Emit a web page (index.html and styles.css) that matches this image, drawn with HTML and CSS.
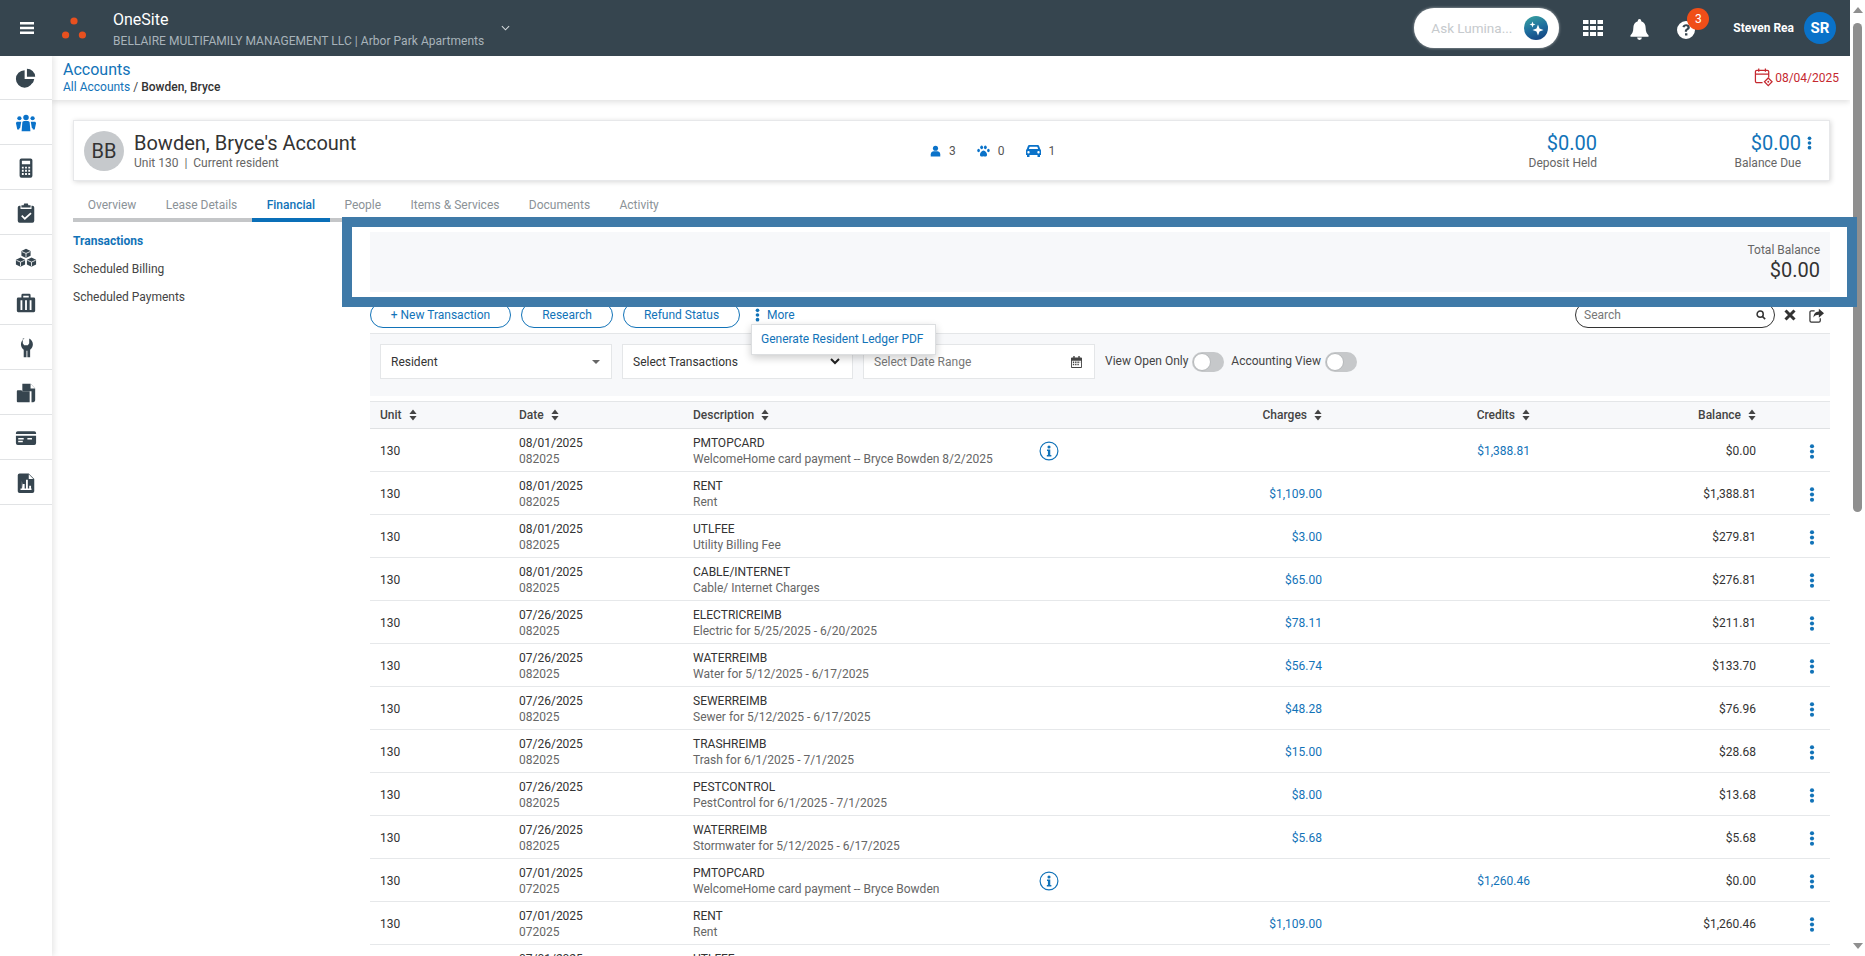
FILE: index.html
```html
<!DOCTYPE html>
<html lang="en">
<head>
<meta charset="utf-8">
<title>OneSite - Accounts</title>
<link rel="stylesheet" href="styles.css">
</head>
<body>
<svg class="defs" width="0" height="0" aria-hidden="true">
  <symbol id="kebab" viewBox="0 0 6 16"><circle cx="3" cy="2.4" r="2.2"/><circle cx="3" cy="8" r="2.2"/><circle cx="3" cy="13.6" r="2.2"/></symbol>
  <symbol id="sort" viewBox="0 0 8 12"><path d="M4 0.5 7.6 5H.4zM4 11.5.4 7h7.2z"/></symbol>
  <symbol id="info" viewBox="0 0 22 22"><circle cx="11" cy="11" r="9.8" fill="none" stroke="currentColor" stroke-width="1.3"/><circle cx="11" cy="6.6" r="1.7" fill="currentColor"/><path fill="currentColor" d="M8.8 9.4h3.6v6h1.2v1.6H8.6v-1.6h1.2v-4.4h-1z"/></symbol>
</svg>
<div class="window">
  <header class="topbar">
    <svg class="burger" viewBox="0 0 14 12" width="14" height="12"><path d="M0 0h14v2.4H0zM0 4.8h14v2.4H0zM0 9.6h14V12H0z"/></svg>
    <svg class="logo" viewBox="0 0 24 22" width="24" height="22"><circle cx="12" cy="4" r="3.6"/><circle cx="3.6" cy="18" r="3.6"/><circle cx="20.4" cy="18" r="3.6"/></svg>
    <div class="brand">
      <div class="brand-name">OneSite</div>
      <div class="brand-sub">BELLAIRE MULTIFAMILY MANAGEMENT LLC | Arbor Park Apartments</div>
    </div>
    <svg class="brand-chevron" viewBox="0 0 10 6" width="9" height="6"><path d="M1 1l4 4 4-4" fill="none" stroke="#d5dadd" stroke-width="1.2"/></svg>
    <div class="lumina">
      <span class="lumina-text">Ask Lumina...</span>
      <span class="lumina-orb">
        <svg viewBox="0 0 24 24" width="24" height="24"><path fill="#fff" d="M14 8.500l1.500 4 4 1.500-4 1.500-1.500 4-1.500-4-4-1.500 4-1.500zM8.500 5.500l.8 2.200 2.200.8-2.200.8-.8 2.200-.8-2.200-2.200-.8 2.200-.8z"/></svg>
      </span>
    </div>
    <svg class="top-icon grid-icon" viewBox="0 0 20 16" width="20" height="16"><path d="M0 0h5.500v4H0zM7 0h6v4H7zM14.500 0H20v4h-5.500zM0 6h5.500v4H0zM7 6h6v4H7zM14.500 6H20v4h-5.500zM0 12h5.500v4H0zM7 12h6v4H7zM14.500 12H20v4h-5.500z"/></svg>
    <svg class="top-icon bell-icon" viewBox="0 0 20 22" width="19" height="21"><path d="M10 0a1.800 1.800 0 0 1 1.800 1.800v.6C15 3.200 16.500 6 16.500 9.500c0 4.200 1.300 5.800 3 7.500v1.500H.5V17c1.700-1.700 3-3.300 3-7.500C3.500 6 5 3.200 8.200 2.400v-.6A1.800 1.800 0 0 1 10 0zM7.500 19.500h5a2.500 2.500 0 0 1-5 0z"/></svg>
    <div class="help">
      <svg class="top-icon" viewBox="0 0 18 18" width="18" height="18"><path fill-rule="evenodd" d="M9 0a9 9 0 1 1 0 18A9 9 0 0 1 9 0zM9.200 3.200c-2 0-3.300 1-3.800 2.500l2 .8c.3-.8.800-1.300 1.700-1.300.8 0 1.400.4 1.400 1.100 0 .6-.4.900-1.200 1.400-1 .6-1.500 1.300-1.500 2.500v.6h2.200v-.4c0-.6.300-.9 1-1.300 1.100-.7 1.800-1.400 1.800-2.800 0-1.900-1.600-3.100-3.600-3.100zM8 12.300v2.300h2.400v-2.300z"/></svg>
      <span class="badge">3</span>
    </div>
    <span class="user-name">Steven Rea</span>
    <span class="user-avatar">SR</span>
  </header>

  <div class="body-row">
    <nav class="sidebar">
      <a class="side-item"><svg viewBox="0 0 24 24" width="22" height="22"><path d="M10.500 3.500A9.500 9.500 0 1 0 20 13h-9.500z"/><path d="M13 2a9 9 0 0 1 9 8.500h-9z"/><path d="M13.500 13H21a9 9 0 0 1-2.700 5.300z"/></svg></a>
      <a class="side-item active"><svg viewBox="0 0 24 24" width="22" height="22"><circle cx="12" cy="6" r="3"/><path d="M8 11.500c0-1 1-1.800 2-1.800h4c1 0 2 .8 2 1.800l.8 9.500H7.200z"/><circle cx="4.800" cy="6.800" r="2.300"/><path d="M2 10.500h4.800L5.600 17.500H5l-.5 1.500H2.500L1 12z"/><circle cx="19.200" cy="6.800" r="2.300"/><path d="M22 10.500h-4.800l1.200 7h.6l.5 1.500h2l1.500-7z"/></svg></a>
      <a class="side-item"><svg viewBox="0 0 24 24" width="22" height="22"><path fill-rule="evenodd" d="M7 1.500h10a2 2 0 0 1 2 2v17a2 2 0 0 1-2 2H7a2 2 0 0 1-2-2v-17a2 2 0 0 1 2-2zM7.500 4v4h9V4zM7.500 10.500v2h2v-2zm3.500 0v2h2v-2zm3.500 0v2h2v-2zM7.500 14v2h2v-2zm3.500 0v2h2v-2zm3.500 0v2h2v-2zM7.500 17.500v2h2v-2zm3.500 0v2h2v-2zm3.500 0v2h2v-2z"/></svg></a>
      <a class="side-item"><svg viewBox="0 0 24 24" width="22" height="22"><path fill-rule="evenodd" d="M10 1.500h4l.6 2H17V6H7V3.500h2.400zM5 4h1v3.500h12V4h1a2 2 0 0 1 2 2v14.500a2 2 0 0 1-2 2H5a2 2 0 0 1-2-2V6a2 2 0 0 1 2-2zm11.800 7.500L10.700 17 8 14.300l-1.300 1.300 4 3.900 7.400-6.600z"/></svg></a>
      <a class="side-item"><svg viewBox="0 0 24 24" width="22" height="22"><path d="M12 2l5 2.300v5.200l-5 2.400-5-2.400V4.300z"/><path d="M6 11.500l5 2.300V19l-5 2.500L1 19v-5.200z"/><path d="M18 11.500l5 2.300V19l-5 2.500-5-2.500v-5.200z"/><path class="gap" d="M7.500 5l4.500 2 4.500-2M12 7v4.500M1.500 14.500l4.500 2 4.500-2M6 16.500v4.500M13.500 14.500l4.500 2 4.500-2M18 16.500v4.500"/></svg></a>
      <a class="side-item"><svg viewBox="0 0 24 24" width="22" height="22"><path fill-rule="evenodd" d="M8.500 2h7A1.500 1.500 0 0 1 17 3.500V6h3.500A1.500 1.500 0 0 1 22 7.500v13a1.500 1.500 0 0 1-1.500 1.500h-17A1.500 1.500 0 0 1 2 20.500v-13A1.500 1.500 0 0 1 3.500 6H7V3.500A1.500 1.500 0 0 1 8.500 2zM9 4v2h6V4zM6 9v10.500h2V9zm5 0v10.500h2V9zm5 0v10.500h2V9z"/></svg></a>
      <a class="side-item"><svg viewBox="0 0 24 24" width="22" height="22"><path d="M8.500 1.500v5.200L10 9h4l1.500-2.300V1.500c2.500 1.200 4 3.700 4 6.300 0 2.500-1.300 4.700-3 6v8.200h-3v-7h-1v7h-3V13.800c-1.700-1.300-3-3.500-3-6 0-2.600 1.500-5.100 4-6.300z"/></svg></a>
      <a class="side-item"><svg viewBox="0 0 24 24" width="22" height="22"><path d="M8 2h9l5 5v13a2 2 0 0 1-2 2h-2V10H8z"/><path d="M2 10a1 1 0 0 1 1-1h4l1 1h8v12H3a1 1 0 0 1-1-1z"/><path class="fold" d="M17 2v5h5z"/></svg></a>
      <a class="side-item"><svg viewBox="0 0 24 24" width="22" height="22"><path fill-rule="evenodd" d="M3 4.500h18a2 2 0 0 1 2 2v11a2 2 0 0 1-2 2H3a2 2 0 0 1-2-2v-11a2 2 0 0 1 2-2zM1 7.500v2h22v-2zM3.500 12v1.500h6V12zm10 0v1.500h5V12zM3.500 15v1.500h5V15z"/></svg></a>
      <a class="side-item"><svg viewBox="0 0 24 24" width="22" height="22"><path fill-rule="evenodd" d="M5 1.500h10l6 6V21a2 2 0 0 1-2 2H5a2 2 0 0 1-2-2V3.500a2 2 0 0 1 2-2zM15 2.500v5h5zM7.500 9.500v8.500H6v1.500h12V18h-.5v-3h-2v3H14V8.500h-2V18h-1.500v-5h-2v5z"/></svg></a>
    </nav>

    <main class="main">
      <div class="page-head">
        <div>
          <div class="page-title">Accounts</div>
          <div class="crumbs"><a>All Accounts</a> / <b>Bowden, Bryce</b></div>
        </div>
        <div class="as-of">
          <svg viewBox="0 0 20 20" width="19" height="19"><path fill="none" stroke="currentColor" stroke-width="1.300" d="M9 15.500H3a1.500 1.500 0 0 1-1.500-1.500V4A1.500 1.500 0 0 1 3 2.500h11A1.500 1.500 0 0 1 15.500 4v6M1.500 6.500h14M5 .5v3.500M12 .5v3.500"/><path fill="none" stroke="currentColor" stroke-width="1.300" d="M15 10.500l4 4-4 4-4-4z"/><circle cx="15" cy="14.500" r="1" fill="currentColor"/></svg>
          <span>08/04/2025</span>
        </div>
      </div>

      <section class="account-card">
        <div class="identity">
          <span class="initials">BB</span>
          <div>
            <div class="account-name">Bowden, Bryce's Account</div>
            <div class="account-sub">Unit 130&nbsp; |&nbsp; Current resident</div>
          </div>
        </div>
        <div class="stats">
          <span class="stat"><svg viewBox="0 0 12 12" width="11" height="12"><circle cx="6" cy="3" r="2.800"/><path d="M.8 12V9.500C.8 7.500 2.500 6.200 4 6.200h4c1.500 0 3.200 1.300 3.200 3.300V12z"/></svg>3</span>
          <span class="stat"><svg viewBox="0 0 14 12" width="13" height="12"><ellipse cx="5" cy="2" rx="1.500" ry="2"/><ellipse cx="9" cy="2" rx="1.500" ry="2"/><ellipse cx="1.700" cy="5.500" rx="1.400" ry="1.800"/><ellipse cx="12.300" cy="5.500" rx="1.400" ry="1.800"/><path d="M7 5.500c2 0 3.800 2.500 3.800 4.500 0 1.500-1.200 2-2 2-.7 0-1.200-.4-1.800-.4s-1.100.4-1.800.4c-.8 0-2-.5-2-2 0-2 1.800-4.500 3.800-4.500z"/></svg>0</span>
          <span class="stat"><svg viewBox="0 0 15 12" width="15" height="12"><path fill-rule="evenodd" d="M3.500 0h8c.8 0 1.400.5 1.700 1.200L14.200 4c.5.400.8 1 .8 1.600V10h-1v2h-2.500v-2h-8v2H1v-2H0V5.600C0 5 .3 4.400.8 4l1-2.800C2.100.5 2.700 0 3.500 0zm.2 1.800L2.900 4h9.200l-.8-2.200zM2.500 6a1.200 1.200 0 1 0 0 2.400 1.200 1.200 0 0 0 0-2.400zm10 0a1.200 1.200 0 1 0 0 2.400 1.200 1.200 0 0 0 0-2.400z"/></svg>1</span>
        </div>
        <div class="money deposit">
          <div class="amount">$0.00</div>
          <div class="amount-label">Deposit Held</div>
        </div>
        <div class="money due">
          <div class="amount">$0.00</div>
          <div class="amount-label">Balance Due</div>
        </div>
        <svg class="card-kebab" width="5" height="14"><use href="#kebab"/></svg>
      </section>

      <div class="tabs">
        <a class="tab">Overview</a>
        <a class="tab">Lease Details</a>
        <a class="tab on">Financial</a>
        <a class="tab">People</a>
        <a class="tab">Items &amp; Services</a>
        <a class="tab">Documents</a>
        <a class="tab">Activity</a>
      </div>

      <div class="content">
        <aside class="subnav">
          <a class="on">Transactions</a>
          <a>Scheduled Billing</a>
          <a>Scheduled Payments</a>
        </aside>

        <div class="panel">
          <div class="summary">
            <div class="summary-label">Total Balance</div>
            <div class="summary-value">$0.00</div>
          </div>

          <div class="toolbar">
            <button class="pill w-new">+ New Transaction</button>
            <button class="pill w-research">Research</button>
            <button class="pill w-refund">Refund Status</button>
            <div class="more">
              <svg class="more-kebab" width="5" height="14"><use href="#kebab"/></svg>
              <span>More</span>
              <div class="more-menu">Generate Resident Ledger PDF</div>
            </div>
            <div class="search">
              <span>Search</span>
              <svg viewBox="0 0 12 12" width="10" height="10"><circle cx="5" cy="5" r="3.700" fill="none" stroke="#333" stroke-width="1.800"/><path d="M7.800 7.800L11 11" stroke="#333" stroke-width="2"/></svg>
            </div>
            <svg class="tool-x" viewBox="0 0 12 12" width="12" height="12"><path d="M1.500 1.500l9 9M10.500 1.500l-9 9" stroke="#333" stroke-width="3"/></svg>
            <svg class="tool-share" viewBox="0 0 16 15" width="15" height="15"><path d="M10.500 .2v3C6.800 3.300 5 6 4.800 9.500 6.300 7.500 8 6.800 10.500 6.800v3L16 5z" fill="#333"/><path d="M6 2.500H2.500A1.500 1.500 0 0 0 1 4v9a1.500 1.500 0 0 0 1.500 1.500h8A1.500 1.500 0 0 0 12 13v-2.500" fill="none" stroke="#333" stroke-width="1.300"/></svg>
          </div>

          <div class="filters">
            <div class="field w-res"><span class="dark">Resident</span><i class="tri"></i></div>
            <div class="field w-sel"><span class="dark">Select Transactions</span><svg viewBox="0 0 10 7" width="10" height="7"><path d="M1 1l4 4 4-4" fill="none" stroke="#222" stroke-width="2"/></svg></div>
            <div class="field w-date"><span class="ph">Select Date Range</span><svg viewBox="0 0 12 13" width="11" height="12"><path fill="#444" fill-rule="evenodd" d="M2.500 0h1.500v1.500h4V0h1.500v1.500H11a1 1 0 0 1 1 1V12a1 1 0 0 1-1 1H1a1 1 0 0 1-1-1V2.500a1 1 0 0 1 1-1h1.500zM1 5v7h10V5zm1 1h1.500v1.500H2zm2.500 0H6v1.500H4.500zM7 6h1.500v1.500H7zm2.500 0H10v1.500h-.5zM2 8.500h1.500V10H2zm2.500 0H6V10H4.500zm2.500 0h1.500V10H7z"/></svg></div>
            <span class="toggle-label first">View Open Only</span><span class="toggle"><i></i></span>
            <span class="toggle-label">Accounting View</span><span class="toggle"><i></i></span>
          </div>

          <div class="tr th">
            <span>Unit <svg width="8" height="12"><use href="#sort"/></svg></span>
            <span>Date <svg width="8" height="12"><use href="#sort"/></svg></span>
            <span>Description <svg width="8" height="12"><use href="#sort"/></svg></span>
            <span></span>
            <span class="r">Charges <svg width="8" height="12"><use href="#sort"/></svg></span>
            <span class="r">Credits <svg width="8" height="12"><use href="#sort"/></svg></span>
            <span class="r">Balance <svg width="8" height="12"><use href="#sort"/></svg></span>
            <span></span>
          </div>

          <div class="tr"><span>130</span><div><div>08/01/2025</div><div class="sub">082025</div></div><div><div>PMTOPCARD</div><div class="sub">WelcomeHome card payment -- Bryce Bowden 8/2/2025</div></div><svg class="info" width="20" height="20"><use href="#info"/></svg><span></span><a class="r link">$1,388.81</a><span class="r">$0.00</span><svg class="row-kebab" width="6" height="15"><use href="#kebab"/></svg></div>
          <div class="tr"><span>130</span><div><div>08/01/2025</div><div class="sub">082025</div></div><div><div>RENT</div><div class="sub">Rent</div></div><span></span><a class="r link">$1,109.00</a><span></span><span class="r">$1,388.81</span><svg class="row-kebab" width="6" height="15"><use href="#kebab"/></svg></div>
          <div class="tr"><span>130</span><div><div>08/01/2025</div><div class="sub">082025</div></div><div><div>UTLFEE</div><div class="sub">Utility Billing Fee</div></div><span></span><a class="r link">$3.00</a><span></span><span class="r">$279.81</span><svg class="row-kebab" width="6" height="15"><use href="#kebab"/></svg></div>
          <div class="tr"><span>130</span><div><div>08/01/2025</div><div class="sub">082025</div></div><div><div>CABLE/INTERNET</div><div class="sub">Cable/ Internet Charges</div></div><span></span><a class="r link">$65.00</a><span></span><span class="r">$276.81</span><svg class="row-kebab" width="6" height="15"><use href="#kebab"/></svg></div>
          <div class="tr"><span>130</span><div><div>07/26/2025</div><div class="sub">082025</div></div><div><div>ELECTRICREIMB</div><div class="sub">Electric for 5/25/2025 - 6/20/2025</div></div><span></span><a class="r link">$78.11</a><span></span><span class="r">$211.81</span><svg class="row-kebab" width="6" height="15"><use href="#kebab"/></svg></div>
          <div class="tr"><span>130</span><div><div>07/26/2025</div><div class="sub">082025</div></div><div><div>WATERREIMB</div><div class="sub">Water for 5/12/2025 - 6/17/2025</div></div><span></span><a class="r link">$56.74</a><span></span><span class="r">$133.70</span><svg class="row-kebab" width="6" height="15"><use href="#kebab"/></svg></div>
          <div class="tr"><span>130</span><div><div>07/26/2025</div><div class="sub">082025</div></div><div><div>SEWERREIMB</div><div class="sub">Sewer for 5/12/2025 - 6/17/2025</div></div><span></span><a class="r link">$48.28</a><span></span><span class="r">$76.96</span><svg class="row-kebab" width="6" height="15"><use href="#kebab"/></svg></div>
          <div class="tr"><span>130</span><div><div>07/26/2025</div><div class="sub">082025</div></div><div><div>TRASHREIMB</div><div class="sub">Trash for 6/1/2025 - 7/1/2025</div></div><span></span><a class="r link">$15.00</a><span></span><span class="r">$28.68</span><svg class="row-kebab" width="6" height="15"><use href="#kebab"/></svg></div>
          <div class="tr"><span>130</span><div><div>07/26/2025</div><div class="sub">082025</div></div><div><div>PESTCONTROL</div><div class="sub">PestControl for 6/1/2025 - 7/1/2025</div></div><span></span><a class="r link">$8.00</a><span></span><span class="r">$13.68</span><svg class="row-kebab" width="6" height="15"><use href="#kebab"/></svg></div>
          <div class="tr"><span>130</span><div><div>07/26/2025</div><div class="sub">082025</div></div><div><div>WATERREIMB</div><div class="sub">Stormwater for 5/12/2025 - 6/17/2025</div></div><span></span><a class="r link">$5.68</a><span></span><span class="r">$5.68</span><svg class="row-kebab" width="6" height="15"><use href="#kebab"/></svg></div>
          <div class="tr"><span>130</span><div><div>07/01/2025</div><div class="sub">072025</div></div><div><div>PMTOPCARD</div><div class="sub">WelcomeHome card payment -- Bryce Bowden</div></div><svg class="info" width="20" height="20"><use href="#info"/></svg><span></span><a class="r link">$1,260.46</a><span class="r">$0.00</span><svg class="row-kebab" width="6" height="15"><use href="#kebab"/></svg></div>
          <div class="tr"><span>130</span><div><div>07/01/2025</div><div class="sub">072025</div></div><div><div>RENT</div><div class="sub">Rent</div></div><span></span><a class="r link">$1,109.00</a><span></span><span class="r">$1,260.46</span><svg class="row-kebab" width="6" height="15"><use href="#kebab"/></svg></div>
          <div class="tr"><span>130</span><div><div>07/01/2025</div><div class="sub">072025</div></div><div><div>UTLFEE</div><div class="sub">Utility Billing Fee</div></div><span></span><a class="r link">$3.00</a><span></span><span class="r">$151.46</span><svg class="row-kebab" width="6" height="15"><use href="#kebab"/></svg></div>
        </div>
      </div>
    </main>
  </div>
</div>

<div class="scrollbar">
  <i class="arrow up"></i>
  <span class="thumb"></span>
  <i class="arrow down"></i>
</div>

<div class="highlight"></div>
</body>
</html>
```

FILE: styles.css
```css
* { box-sizing: border-box; }
html, body { margin: 0; height: 100%; overflow: hidden; }
body {
  display: flex;
  font-family: Roboto, "Liberation Sans", sans-serif;
  font-size: 12px;
  color: #333;
  background: #fff;
}
a { color: inherit; text-decoration: none; }
.defs { position: absolute; }

.window { flex: 1; min-width: 0; height: 956px; display: flex; flex-direction: column; overflow: hidden; }

/* top bar */
.topbar {
  height: 56px;
  flex: none;
  display: flex;
  align-items: center;
  background: #36454f;
  color: #fff;
  position: relative;
  z-index: 3;
}
.burger { fill: #fff; margin-left: 20px; }
.logo { fill: #e8501f; margin-left: 28px; }
.brand { margin-left: 27px; }
.brand-name { font-size: 16px; line-height: 20px; margin-top: 2px; margin-bottom: 3px; }
.brand-sub { font-size: 12px; line-height: 16px; color: #a8b3ba; letter-spacing: .04px; }
.brand-chevron { margin-left: 17px; }
.lumina {
  margin-left: auto;
  width: 145px;
  height: 40px;
  border-radius: 20px;
  background: #fff;
  box-shadow: 0 0 3px rgba(255,255,255,.6);
  display: flex;
  align-items: center;
  padding-left: 17px;
}
.lumina-text { color: #c6cacd; font-size: 13.5px; width: 93px; white-space: nowrap; }
.lumina-orb {
  width: 24px; height: 24px; border-radius: 50%;
  background: linear-gradient(160deg, #3aa59f 0%, #1f6f9f 50%, #123c7c 100%);
  display: block;
}
.lumina-orb svg { display: block; }
.top-icon { fill: #fff; display: block; }
.grid-icon { margin-left: 24px; }
.bell-icon { margin-left: 27px; margin-top: 2px; }
.help { position: relative; margin-left: 28px; margin-top: 3px; }
.badge {
  position: absolute; left: 10px; top: -13px;
  width: 22px; height: 22px; border-radius: 50%;
  background: #f04e18; color: #fff;
  font-size: 12px; line-height: 22px; text-align: center;
}
.user-name { margin-left: 38px; font-size: 12px; font-weight: 700; white-space: nowrap; }
.user-avatar {
  margin-left: 10px; margin-right: 14px;
  width: 32px; height: 32px; border-radius: 50%;
  background: #0a72c9; color: #fff;
  font-size: 15px; font-weight: 700; line-height: 32px; text-align: center;
}

.body-row { flex: 1; min-height: 0; display: flex; }

/* left rail */
.sidebar {
  width: 52px; flex: none;
  background: #fff;
  box-shadow: 2px 0 6px rgba(0,0,0,.1);
  position: relative; z-index: 2;
}
.side-item {
  height: 45px;
  padding-top: 1px;
  display: flex; align-items: center; justify-content: center;
  border-bottom: 1px solid #e1e3e5;
}
.side-item:first-child { height: 44px; padding-top: 0; }
.side-item svg { fill: #36454f; display: block; }
.side-item .gap { fill: none; stroke: #fff; stroke-width: .9; }
.side-item .fold { fill: #fff; }
.side-item.active svg { fill: #0a72c9; }

/* main */
.main { flex: 1; min-width: 0; padding: 0; }
.page-head {
  height: 44px;
  padding: 4px 3px 0 11px;
  display: flex; justify-content: space-between;
  background: #fff;
  box-shadow: 0 2px 6px rgba(0,0,0,.13);
  position: relative;
}
.page-title { font-size: 16px; line-height: 20px; color: #1273b8; }
.crumbs { font-size: 12px; line-height: 16px; margin-top: -1px; color: #444; }
.crumbs a { color: #1273b8; }
.crumbs b { font-weight: 500; color: #333; }
.as-of { display: flex; align-items: center; gap: 2px; height: 35px; color: #c5282f; font-size: 12px; padding-right: 8px; }
.as-of svg { display: block; }

.account-card {
  margin: 20px 20px 0 21px;
  height: 61px;
  border: 1px solid #e7e8ea;
  box-shadow: 1px 1px 5px rgba(0,0,0,.16);
  background: #fff;
  display: flex; align-items: center;
  padding-left: 10px;
}
.identity { width: 846px; flex: none; display: flex; align-items: center; gap: 10px; }
.initials {
  width: 40px; height: 40px; border-radius: 50%;
  background: #c6c9cc; color: #333;
  font-size: 20px; line-height: 40px; text-align: center;
  flex: none;
}
.account-name { font-size: 20px; line-height: 24px; color: #333; }
.account-sub { font-size: 12px; line-height: 16px; color: #666; }
.stats { display: flex; gap: 21px; width: 148px; }
.stat { display: flex; align-items: center; gap: 8px; color: #555; font-size: 12px; }
.stat svg { fill: #0a72c9; display: block; }
.money { text-align: right; }
.deposit { width: 519px; }
.due { width: 204px; }
.amount { font-size: 20px; line-height: 24px; color: #1273b8; }
.amount-label { font-size: 12px; line-height: 16px; color: #666; }
.card-kebab { fill: #1273b8; margin-left: 6px; margin-bottom: 15px; }

.tabs { margin: 7px 0 0 21px; display: flex; height: 34px; width: 700px; }
.tab {
  padding: 0 14.7px;
  line-height: 34px;
  border-bottom: 4px solid #c4c6c8;
  color: #8b9297;
  font-size: 12px;
  white-space: nowrap;
}
.tab.on { color: #1273b8; font-weight: 500; border-bottom-color: #0a6fb8; }

.content { display: flex; padding: 0 20px 0 21px; }
.subnav { width: 297px; flex: none; padding-top: 5px; display: flex; flex-direction: column; }
.subnav a { line-height: 28px; height: 28px; font-size: 12px; color: #444; }
.subnav a.on { color: #1273b8; font-weight: 700; }
.panel { flex: 1; min-width: 0; }

.summary {
  margin-top: 10px;
  height: 60px;
  background: #f7f8fa;
  text-align: right;
  padding: 10px 10px 0 0;
}
.summary-label { font-size: 12px; line-height: 16px; color: #666; }
.summary-value { font-size: 20px; line-height: 24px; color: #333; }

.toolbar { margin-top: 10px; height: 26px; margin-bottom: 5px; display: flex; align-items: center; }
.pill {
  height: 26px; border: 1px solid #1273b8; border-radius: 13px;
  background: #fff; color: #1273b8;
  font: 12px Roboto, "Liberation Sans", sans-serif;
  padding: 0;
  margin-right: 10px;
}
.w-new { width: 141px; }
.w-research { width: 92px; }
.w-refund { width: 117px; }
.more { position: relative; display: flex; align-items: center; color: #1273b8; margin-left: 5px; }
.more-kebab { fill: #1273b8; margin-right: 7px; }
.more-menu {
  position: absolute; left: -4px; top: 16px;
  width: 185px; height: 31px;
  background: #fff;
  border: 1px solid #dcdee0;
  box-shadow: 0 3px 8px rgba(0,0,0,.2);
  line-height: 29px;
  padding-left: 9px;
  white-space: nowrap;
  z-index: 4;
}
.search {
  margin-left: auto;
  width: 200px; height: 26px;
  border: 1px solid #333; border-radius: 13px;
  display: flex; align-items: center; justify-content: space-between;
  padding: 0 8px;
  color: #777;
}
.tool-x { margin-left: 9px; }
.tool-share { margin-left: 13px; margin-right: 6px; }

.filters {
  height: 63px;
  background: #f7f8fa;
  border-top: 1px solid #e4e6e8;
  display: flex; align-items: flex-start;
  padding: 10px 0 0 10px;
}
.field {
  height: 35px;
  background: #fff;
  border: 1px solid #e4e6e8;
  display: flex; align-items: center; justify-content: space-between;
  padding: 0 10px;
  margin-right: 10px;
}
.w-res { width: 232px; padding-right: 11px; }
.w-sel { width: 231px; padding-right: 12px; }
.w-date { width: 232px; padding-right: 12px; }
.dark { color: #333; }
.ph { color: #777; }
.tri { width: 0; height: 0; border: 4px solid transparent; border-top: 4px solid #666; border-bottom: 0; }
.toggle-label { line-height: 35px; margin-right: 4px; color: #444; white-space: nowrap; }
.toggle {
  width: 32px; height: 20px; border-radius: 10px;
  background: #c6c8ca;
  margin: 8px 7px 0 0;
  padding: 1px;
  display: block;
}
.toggle i { display: block; width: 18px; height: 18px; border-radius: 50%; background: #fff; border: 1px solid #b5b8ba; }

.tr {
  display: grid;
  grid-template-columns: 139px 174px 347px 18px 264px 208px 226px 1fr;
  align-items: center;
  height: 43px;
  padding: 2px 0 0 10px;
  border-bottom: 1px solid #e6e8ea;
  line-height: 16px;
  color: #333;
}
.tr .r { text-align: right; }
.tr .sub { color: #666; }
.tr .link { color: #1273b8; }
.th {
  height: 28px;
  padding-top: 0;
  margin-top: 5px;
  background: #f7f8fa;
  border-top: 1px solid #e4e6e8;
  border-bottom: 1px solid #dfe1e3;
  font-weight: 500;
  color: #444;
}
.th span { white-space: nowrap; }
.th svg { fill: #444; margin-left: 4px; vertical-align: -2px; }
.info { color: #1273b8; justify-self: center; }
.row-kebab { fill: #1273b8; justify-self: end; margin-right: 15px; }

/* native-looking scrollbar */
.scrollbar {
  width: 15px; height: 956px; flex: none;
  background: #fff;
  display: flex; flex-direction: column; align-items: center;
  position: relative;
}
.thumb { position: absolute; left: 3px; top: 23px; width: 9px; height: 489px; border-radius: 5px; background: #8f8f8f; }
.arrow { position: absolute; left: 3px; width: 0; height: 0; border: 5px solid transparent; }
.arrow.up { top: 7px; border-bottom: 6px solid #8f8f8f; border-top: 0; }
.arrow.down { bottom: 7px; border-top: 6px solid #8f8f8f; border-bottom: 0; }

/* annotation frame over the page */
.highlight {
  position: absolute;
  left: 342px; top: 217px;
  width: 1515px; height: 90px;
  border: 10px solid #3f7aa8;
  pointer-events: none;
  z-index: 5;
}
```
